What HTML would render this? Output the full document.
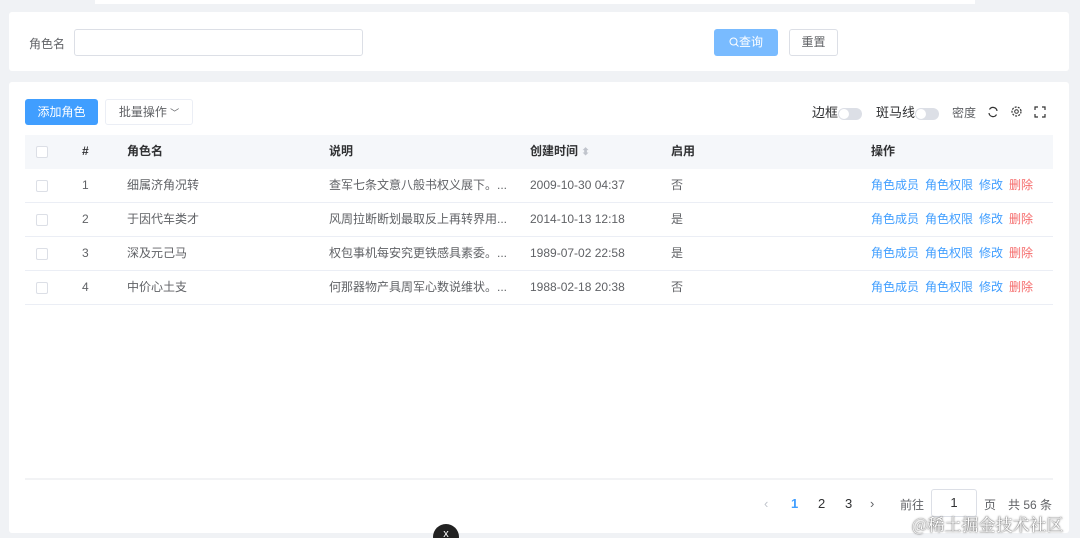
<!DOCTYPE html>
<html><head><meta charset="utf-8"><style>
*{box-sizing:border-box;margin:0;padding:0}
html,body{width:1080px;height:538px;overflow:hidden}
body{background:#f0f2f5;font-family:"Liberation Sans","Noto Sans CJK SC",sans-serif;font-size:12px;color:#606266;position:relative}
.abs{position:absolute}
.card{position:absolute;background:#fff;left:9px;width:1060px;border-radius:3px}
.btn{position:absolute;border-radius:3px;text-align:center;font-size:12px}
.row{position:absolute;left:25px;width:1028px;height:34px;border-bottom:1px solid #ebeef5}
.row span{position:absolute;top:0;line-height:33px;height:33px;white-space:nowrap}
.cb{position:absolute;left:11px;top:11px;width:12px;height:12px;border:1px solid #dcdfe6;border-radius:2px;background:#fff}
.l{color:#409eff;margin-right:6px}
.d{color:#f56c6c}
.sw{display:inline-block;width:24px;height:12px;border-radius:6px;background:#dcdfe6;vertical-align:middle;position:relative}
.sw:after{content:"";position:absolute;left:1px;top:1px;width:10px;height:10px;border-radius:5px;background:#fff}
</style></head><body>
<div class="abs" style="left:95px;top:0;width:880px;height:4px;background:#fff"></div>
<div class="card" style="top:12px;height:59px">
  <span class="abs" style="left:20px;top:23px;font-size:12px">角色名</span>
  <div class="abs" style="left:65px;top:17px;width:289px;height:27px;border:1px solid #dcdfe6;border-radius:3px"></div>
  <div class="btn" style="left:705px;top:17px;width:64px;height:27px;background:#79bbff;color:#fff;line-height:27px">
    <svg width="10" height="10" viewBox="0 0 10 10" style="vertical-align:-1px"><circle cx="4.5" cy="4.5" r="3.5" fill="none" stroke="#fff" stroke-width="1"/><path d="M7 7L9.5 9.5" stroke="#fff"/></svg>查询</div>
  <div class="btn" style="left:780px;top:17px;width:49px;height:27px;border:1px solid #dcdfe6;line-height:25px;color:#606266">重置</div>
</div>
<div class="card" style="top:82px;height:451px">
  <div class="btn" style="left:16px;top:17px;width:73px;height:26px;background:#409eff;color:#fff;line-height:26px">添加角色</div>
  <div class="btn" style="left:96px;top:17px;width:88px;height:26px;border:1px solid #ebeef5;line-height:24px">批量操作 <span style="font-size:9px">﹀</span></div>
  <div class="abs" style="left:803px;top:20px;font-size:13px;color:#303133">边框<span class="sw"></span></div>
  <div class="abs" style="left:867px;top:20px;font-size:13px;color:#303133">斑马线<span class="sw"></span></div>
  <span class="abs" style="left:943px;top:22px;color:#606266">密度</span>
  <svg class="abs" style="left:978px;top:24px" width="12" height="12" viewBox="0 0 12 12"><path d="M10 5A4 4 0 0 0 2.5 3.5M2 7a4 4 0 0 0 7.5 1.5" fill="none" stroke="#333" stroke-width="1.2"/></svg>
  <svg class="abs" style="left:1001px;top:23px" width="13" height="13" viewBox="0 0 13 13"><circle cx="6.5" cy="6.5" r="4.5" fill="none" stroke="#333" stroke-width="1.2" stroke-dasharray="2 1.2"/><circle cx="6.5" cy="6.5" r="1.8" fill="none" stroke="#333"/></svg>
  <svg class="abs" style="left:1025px;top:24px" width="12" height="12" viewBox="0 0 12 12"><path d="M1 4V1h3M8 1h3v3M11 8v3H8M4 11H1V8" fill="none" stroke="#333" stroke-width="1.2"/></svg>
</div>
<div class="row" style="top:135px;height:34px;background:#f5f7fa;color:#303133;font-weight:bold;border:none">
  <div class="cb"></div><span style="left:57px">#</span><span style="left:102px">角色名</span><span style="left:304px">说明</span><span style="left:505px">创建时间 <b style="color:#c0c4cc;font-size:10px">⬍</b></span><span style="left:646px">启用</span><span style="left:846px">操作</span>
</div>
<div class="row" style="top:169px"><div class="cb"></div><span style="left:57px">1</span><span style="left:102px">细属济角况转</span><span style="left:304px">查军七条文意八般书权义展下。...</span><span style="left:505px">2009-10-30 04:37</span><span style="left:646px">否</span><span style="left:846px"><i class="l" style="font-style:normal">角色成员</i><i class="l" style="font-style:normal">角色权限</i><i class="l" style="font-style:normal">修改</i><i class="d" style="font-style:normal">删除</i></span></div>
<div class="row" style="top:203px"><div class="cb"></div><span style="left:57px">2</span><span style="left:102px">于因代车类才</span><span style="left:304px">风周拉断断划最取反上再转界用...</span><span style="left:505px">2014-10-13 12:18</span><span style="left:646px">是</span><span style="left:846px"><i class="l" style="font-style:normal">角色成员</i><i class="l" style="font-style:normal">角色权限</i><i class="l" style="font-style:normal">修改</i><i class="d" style="font-style:normal">删除</i></span></div>
<div class="row" style="top:237px"><div class="cb"></div><span style="left:57px">3</span><span style="left:102px">深及元己马</span><span style="left:304px">权包事机每安究更铁感具素委。...</span><span style="left:505px">1989-07-02 22:58</span><span style="left:646px">是</span><span style="left:846px"><i class="l" style="font-style:normal">角色成员</i><i class="l" style="font-style:normal">角色权限</i><i class="l" style="font-style:normal">修改</i><i class="d" style="font-style:normal">删除</i></span></div>
<div class="row" style="top:271px"><div class="cb"></div><span style="left:57px">4</span><span style="left:102px">中价心土支</span><span style="left:304px">何那器物产具周军心数说维状。...</span><span style="left:505px">1988-02-18 20:38</span><span style="left:646px">否</span><span style="left:846px"><i class="l" style="font-style:normal">角色成员</i><i class="l" style="font-style:normal">角色权限</i><i class="l" style="font-style:normal">修改</i><i class="d" style="font-style:normal">删除</i></span></div>
<div class="abs" style="left:25px;top:478px;width:1028px;height:2px;background:#f2f3f5"></div>
<div class="abs" style="left:764px;top:496px;font-size:13px;color:#303133;white-space:nowrap">
<span style="color:#c0c4cc">‹</span>
<span class="abs" style="left:27px;color:#409eff;font-weight:bold">1</span>
<span class="abs" style="left:54px">2</span>
<span class="abs" style="left:81px">3</span>
<span class="abs" style="left:106px;color:#606266">›</span>
<span class="abs" style="left:136px;font-size:12px;color:#606266">前往</span>
<div class="abs" style="left:167px;top:-7px;width:46px;height:28px;border:1px solid #dcdfe6;border-radius:3px;text-align:center;line-height:26px">1</div>
<span class="abs" style="left:220px;font-size:12px;color:#606266">页</span>
<span class="abs" style="left:244px;font-size:12px;color:#606266">共 56 条</span>
</div>
<div class="abs" style="left:912px;top:511px;font-size:17px;color:#fff;text-shadow:0 0 2px #666,0 0 1px #333;font-family:'Noto Serif CJK SC',serif">@稀土掘金技术社区</div>
<div class="abs" style="left:433px;top:524px;width:26px;height:26px;border-radius:13px;background:#222;color:#fff;text-align:center;line-height:20px;font-size:11px">x</div>
</body></html>
